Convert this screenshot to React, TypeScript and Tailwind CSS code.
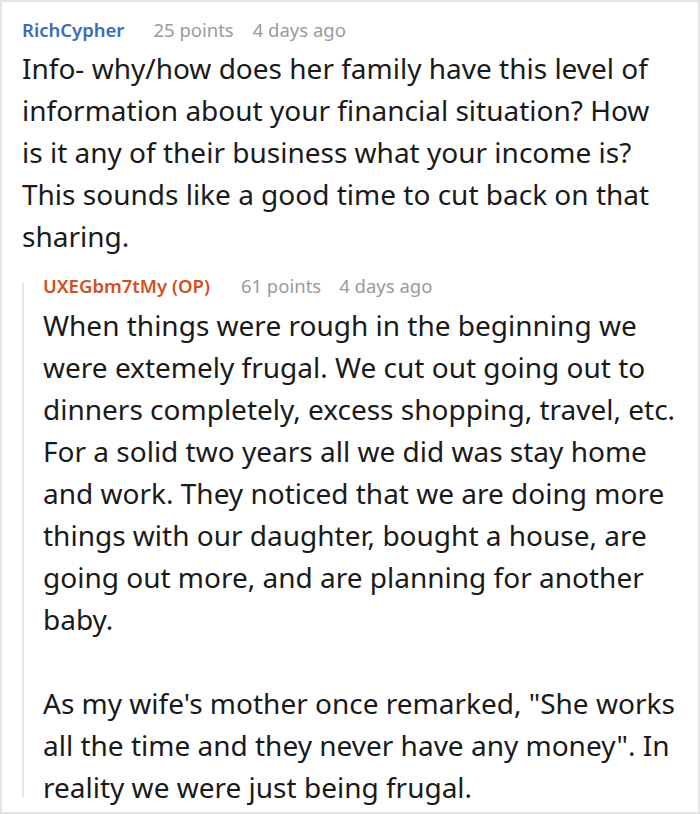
export default function App() {
  return (
    <div className="min-h-screen bg-white" style={{ fontFamily: '"Noto Sans", sans-serif' }}>
      <div className="h-[814px] w-[700px] overflow-hidden border-2 border-[#e4e4e4] pl-5 pt-[16px] pr-4">
        <div className="flex items-baseline text-[18.5px] leading-[24px]">
          <span className="font-semibold text-[#3a6bb8]">RichCypher</span>
          <span className="ml-[29px] text-[#9a9a9a]">25 points</span>
          <span className="ml-[19px] text-[#9a9a9a]">4 days ago</span>
        </div>
        <p className="mr-[20px] mt-[5px] text-[28px] leading-[42px] text-[#1a1a1a]">
          Info- why/how does her family have this level of information about your financial
          situation? How is it any of their business what your income is? This sounds like a good
          time to cut back on that sharing.
        </p>
        <div className="mt-[17px] flex">
          <div className="mb-[11px] mt-[9px] w-[2px] shrink-0 bg-[#e4e4e4]" />
          <div className="pl-[19px]">
            <div className="flex items-baseline text-[18.5px] leading-[24px]">
              <span className="font-semibold text-[#d2501e]">UXEGbm7tMy (OP)</span>
              <span className="ml-[31px] text-[#9a9a9a]">61 points</span>
              <span className="ml-[18px] text-[#9a9a9a]">4 days ago</span>
            </div>
            <p className="mt-[6px] text-[28px] leading-[42px] text-[#1a1a1a]">
              When things were rough in the beginning we were extemely frugal. We cut out going out
              to dinners completely, excess shopping, travel, etc. For a solid two years all we did
              was stay home and work. They noticed that we are doing more things with our daughter,
              bought a house, are going out more, and are planning for another baby.
            </p>
            <p className="mt-[42px] text-[28px] leading-[42px] text-[#1a1a1a]">
              As my wife's mother once remarked, "She works all the time and they never have any
              money". In reality we were just being frugal.
            </p>
          </div>
        </div>
      </div>
    </div>
  );
}
